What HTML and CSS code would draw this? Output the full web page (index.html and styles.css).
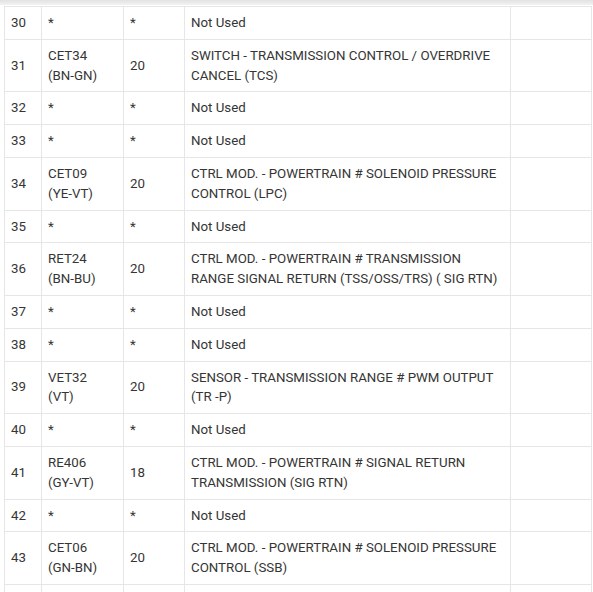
FILE: index.html
```html
<!DOCTYPE html>
<html>
<head>
<meta charset="utf-8">
<link rel="stylesheet" href="styles.css">
</head>
<body>
<div class="wrap">
<div class="shade"></div>
<table class="pins">
<colgroup>
<col class="c1"><col class="c2"><col class="c3"><col class="c4"><col class="c5">
</colgroup>
<tbody>
<tr><td>30</td><td>*</td><td>*</td><td>Not Used</td><td></td></tr>
<tr><td>31</td><td>CET34<br>(BN-GN)</td><td>20</td><td>SWITCH - TRANSMISSION CONTROL / OVERDRIVE CANCEL (TCS)</td><td></td></tr>
<tr><td>32</td><td>*</td><td>*</td><td>Not Used</td><td></td></tr>
<tr><td>33</td><td>*</td><td>*</td><td>Not Used</td><td></td></tr>
<tr><td>34</td><td>CET09<br>(YE-VT)</td><td>20</td><td>CTRL MOD. - POWERTRAIN # SOLENOID PRESSURE CONTROL (LPC)</td><td></td></tr>
<tr><td>35</td><td>*</td><td>*</td><td>Not Used</td><td></td></tr>
<tr><td>36</td><td>RET24<br>(BN-BU)</td><td>20</td><td>CTRL MOD. - POWERTRAIN # TRANSMISSION RANGE SIGNAL RETURN (TSS/OSS/TRS) ( SIG RTN)</td><td></td></tr>
<tr><td>37</td><td>*</td><td>*</td><td>Not Used</td><td></td></tr>
<tr><td>38</td><td>*</td><td>*</td><td>Not Used</td><td></td></tr>
<tr><td>39</td><td>VET32<br>(VT)</td><td>20</td><td>SENSOR - TRANSMISSION RANGE # PWM OUTPUT (TR -P)</td><td></td></tr>
<tr><td>40</td><td>*</td><td>*</td><td>Not Used</td><td></td></tr>
<tr><td>41</td><td>RE406<br>(GY-VT)</td><td>18</td><td>CTRL MOD. - POWERTRAIN # SIGNAL RETURN TRANSMISSION (SIG RTN)</td><td></td></tr>
<tr><td>42</td><td>*</td><td>*</td><td>Not Used</td><td></td></tr>
<tr><td>43</td><td>CET06<br>(GN-BN)</td><td>20</td><td>CTRL MOD. - POWERTRAIN # SOLENOID PRESSURE CONTROL (SSB)</td><td></td></tr>
<tr><td></td><td></td><td></td><td></td><td></td></tr>
</tbody>
</table>
</div>
</body>
</html>
```
FILE: styles.css
```css
html, body {
  margin: 0;
  padding: 0;
  background: #fff;
  overflow: hidden;
}
.wrap {
  width: 593px;
  height: 592px;
  overflow: hidden;
  position: relative;
}
.shade {
  position: absolute;
  left: 0;
  top: 0;
  width: 593px;
  height: 5px;
  background: linear-gradient(#e2e2e2, #f2f2f2);
  z-index: 1;
}
.pins {
  margin: 6px 0 0 4px;
  border-collapse: collapse;
  table-layout: fixed;
  width: 587px;
  font-family: Roboto, "Liberation Sans", sans-serif;
  font-size: 13.3px;
  line-height: 19.8px;
  color: #353535;
}
.c1 { width: 37px; }
.c2 { width: 82px; }
.c3 { width: 61px; }
.c4 { width: 326px; }
.c5 { width: 81px; }
.pins td {
  border: 1px solid #e6e6e6;
  padding: 6px;
  vertical-align: middle;
  text-align: left;
}
```
